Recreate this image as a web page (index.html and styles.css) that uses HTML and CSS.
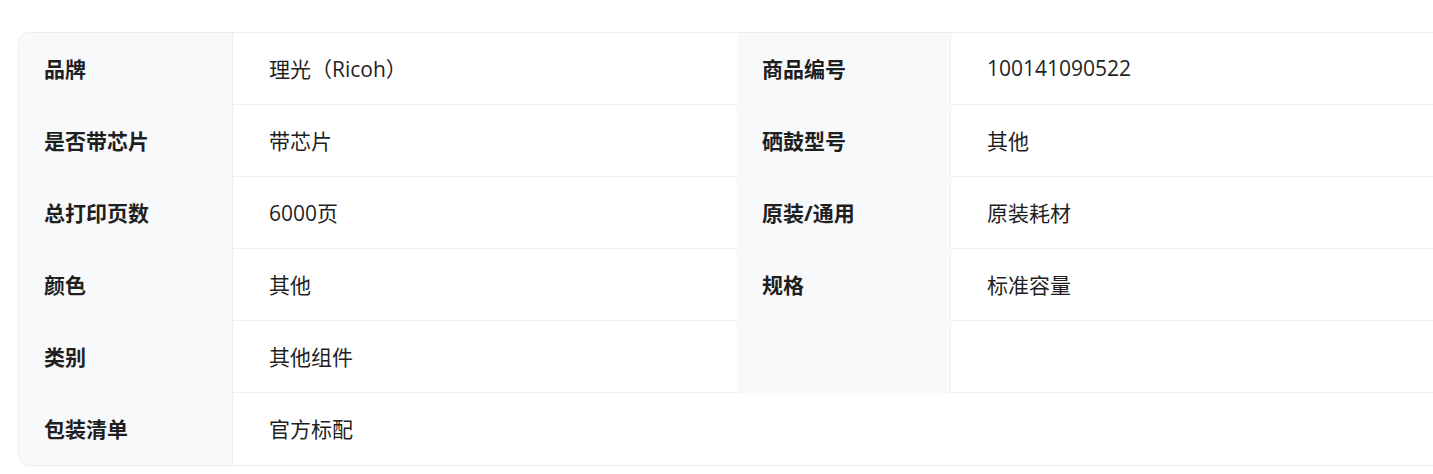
FILE: index.html
```html
<!DOCTYPE html>
<html lang="zh-CN">
<head>
<meta charset="utf-8">
<title>规格参数</title>
<link rel="stylesheet" href="styles.css">
</head>
<body>
<div class="page">
  <div class="spec-card">
    <div class="spec-grid">
      <div class="label">品牌</div>
      <div class="value">理光（Ricoh）</div>
      <div class="label">商品编号</div>
      <div class="value">100141090522</div>

      <div class="label">是否带芯片</div>
      <div class="value">带芯片</div>
      <div class="label">硒鼓型号</div>
      <div class="value">其他</div>

      <div class="label">总打印页数</div>
      <div class="value">6000页</div>
      <div class="label">原装/通用</div>
      <div class="value">原装耗材</div>

      <div class="label">颜色</div>
      <div class="value">其他</div>
      <div class="label">规格</div>
      <div class="value">标准容量</div>

      <div class="label">类别</div>
      <div class="value">其他组件</div>
      <div class="label"></div>
      <div class="value"></div>

      <div class="label">包装清单</div>
      <div class="value value-wide">官方标配</div>
    </div>
  </div>
</div>
</body>
</html>
```

FILE: styles.css
```css
html, body {
  margin: 0;
  padding: 0;
  background: #ffffff;
}

.page {
  width: 1433px;
  height: 474px;
  overflow: hidden;
  padding: 32px 0 0 18px;
  box-sizing: border-box;
  font-family: "Open Sans", "Noto Sans CJK SC", sans-serif;
  color: #1f1f1f;
}

.spec-card {
  width: 1438px;
  border: 1px solid #ebedf0;
  border-radius: 11px;
  overflow: hidden;
  box-sizing: border-box;
}

.spec-grid {
  display: grid;
  grid-template-columns: 214px 504px 214px 1fr;
  grid-auto-rows: 72px;
}

.label {
  background: #f8f9fb;
  border-right: 1px solid #eeeff1;
  box-sizing: border-box;
  display: flex;
  align-items: center;
  padding-left: 25px;
  padding-bottom: 2px;
  font-size: 21px;
  font-weight: 700;
}

.value {
  border-bottom: 1px solid #eeeff1;
  box-sizing: border-box;
  display: flex;
  align-items: center;
  padding-left: 36px;
  padding-bottom: 1px;
  font-size: 21px;
  font-weight: 400;
}

.value-wide {
  grid-column: 2 / 5;
  border-bottom: none;
  padding-bottom: 2px;
}
```
